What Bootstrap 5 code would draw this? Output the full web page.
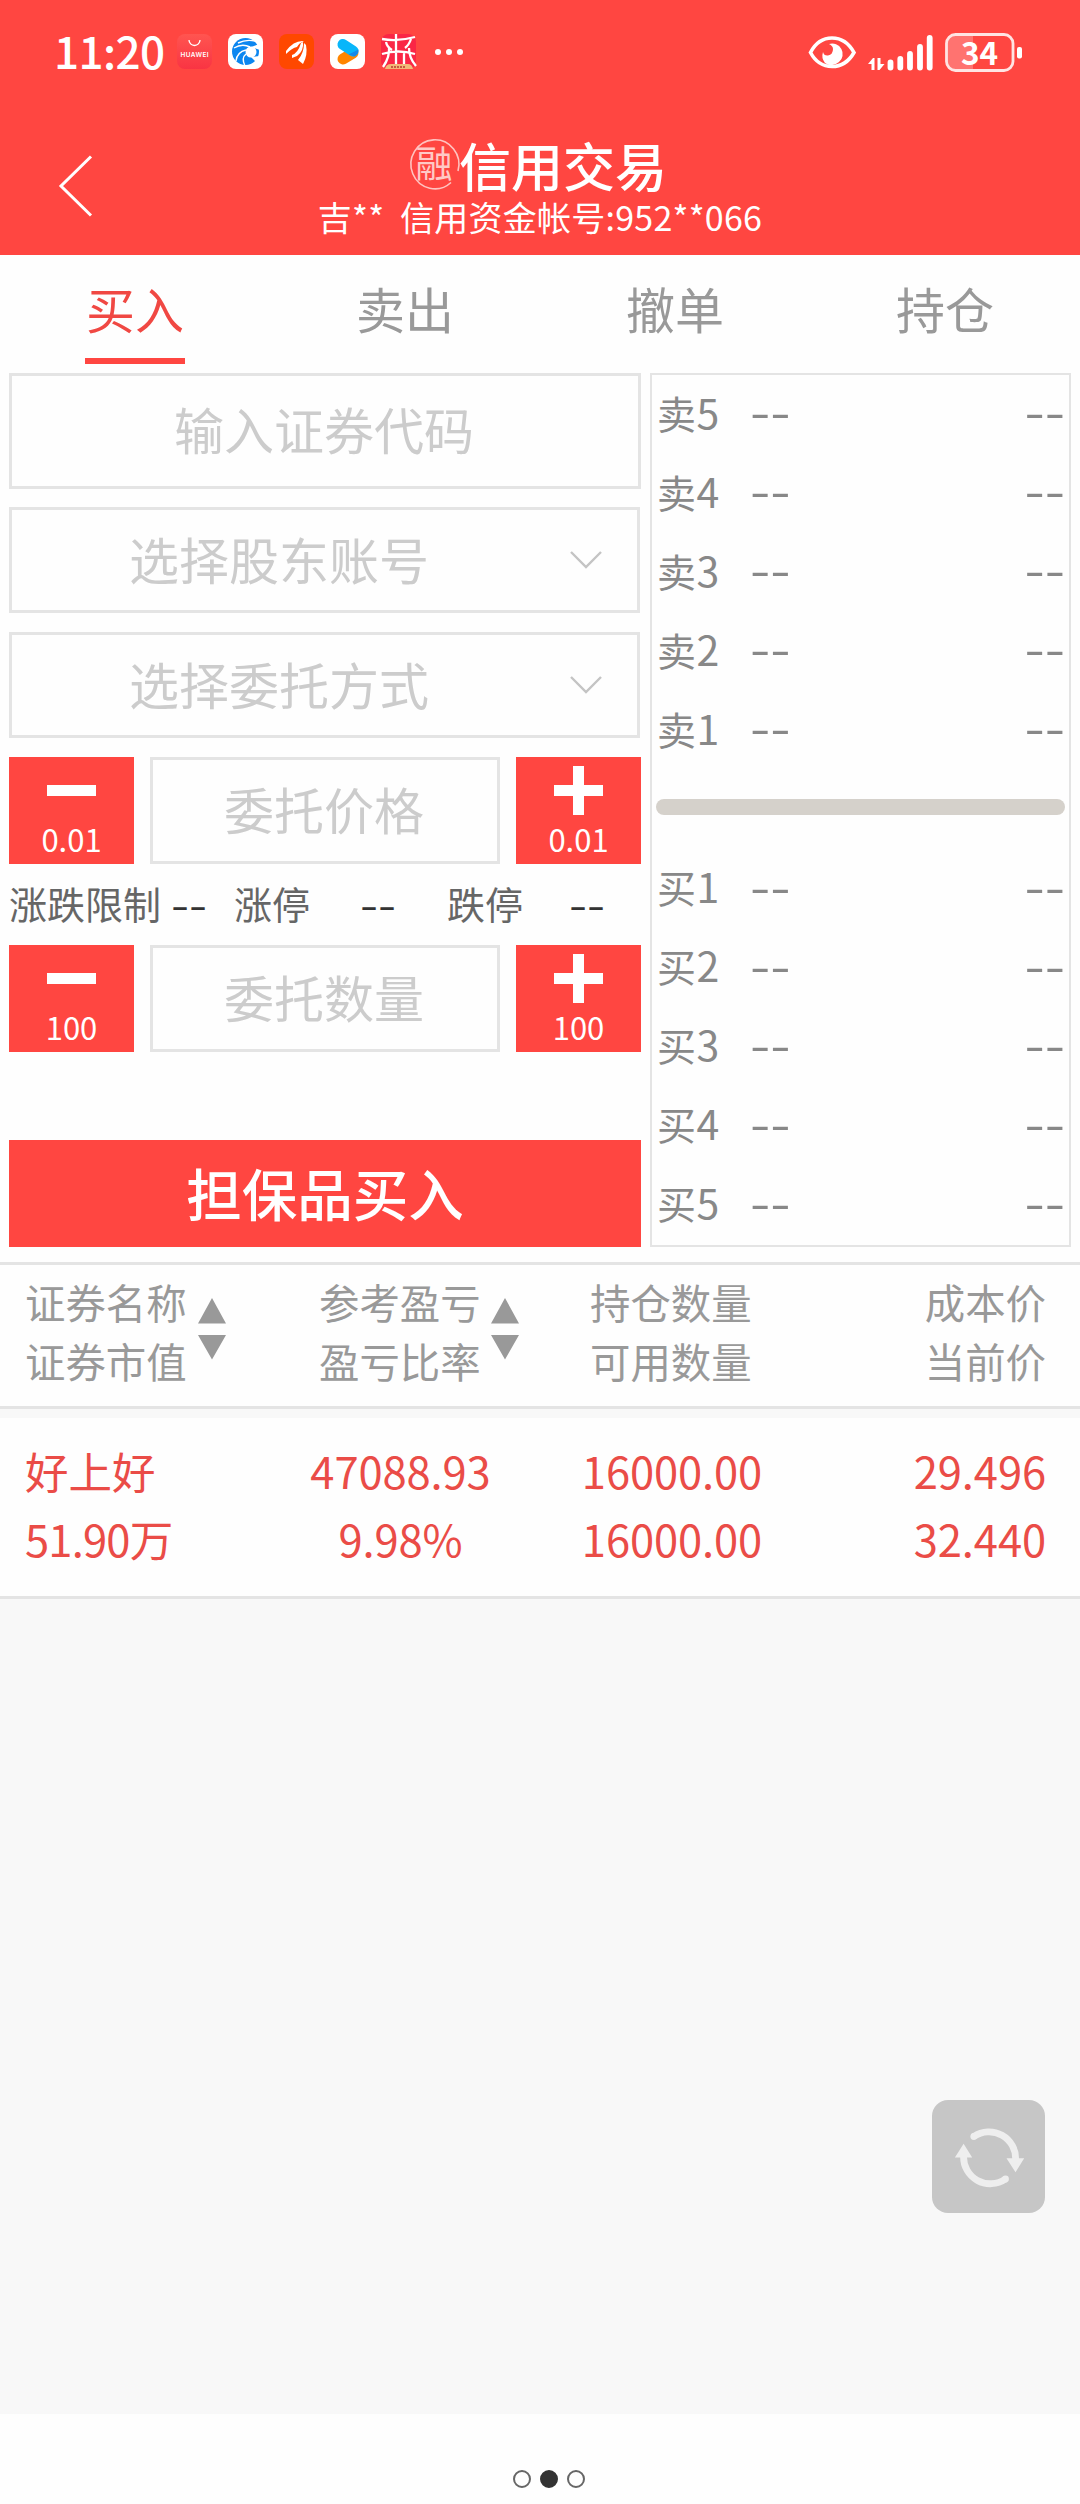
<!DOCTYPE html>
<html lang="zh-CN">
<head>
<meta charset="utf-8">
<meta name="viewport" content="width=device-width, initial-scale=1">
<title>信用交易</title>
<link rel="stylesheet" href="https://cdn.jsdelivr.net/npm/bootstrap@5.3.0/dist/css/bootstrap.min.css">
<style>
:root{--brand:#ff4641;--line:#e4e4e4;--hint:#ccc}
body{font-family:"Noto Sans CJK SC","Noto Sans",sans-serif;background:#fefefe;width:1080px;height:2504px;overflow:hidden}
svg{display:block;flex:none;overflow:visible}
.top-area{background:var(--brand);height:255px}
.status-bar{height:103px;padding:0 58px 0 54px}
.clock{font-size:44px;line-height:60px;font-weight:500;letter-spacing:-.6px;width:123px;padding-bottom:3px}
.app-icons{gap:16px}
.title-area{height:152px}
.back-btn{left:56px;top:51px}
.title-line{font-size:52px;line-height:60px;padding:32px 4px 0 0;font-weight:500}
.account-line{font-size:34px;line-height:40px;margin-top:2px;letter-spacing:.25px}
.trade-tabs{height:118px;padding-top:3px}
.trade-tabs .nav-link{padding:0;width:100px;height:106px;line-height:100px;font-size:49px;color:#999;border-bottom:6px solid transparent;border-radius:0;text-align:center;white-space:nowrap}
.trade-tabs .nav-link.active{color:#f04843;border-color:var(--brand)}
.trade-area{height:889px;padding:0 9px}
.order-form{width:632px;height:874px}
.entry{border:3px solid var(--line);border-radius:0;background:#fefefe;color:var(--hint);font-size:50px;line-height:70px;padding:0 2px 6px 0;display:flex;align-items:center;justify-content:center}
.entry-code{height:116px}
.entry-pick{height:106px;margin-right:1px;justify-content:space-between;padding:0 34px 5px 117px}
.entry-pick svg{margin-top:4px}
.entry-num{width:350px;height:107px;padding-bottom:5px}
.step-btn{width:125px;height:107px;background:var(--brand);border:0;border-radius:0;color:#fff;padding:9px 0 0;display:flex;flex-direction:column;align-items:center;font-size:31px;line-height:47px}
.step-btn:hover,.submit-btn:hover{background:var(--brand);color:#fff}
.limits{height:81px;font-size:38px;color:#666;padding-bottom:4px;line-height:50px}
.dash{display:inline-block;transform:scaleX(1.3);transform-origin:0 50%;color:#333;font-size:40px}
.submit-btn{height:107px;margin-top:88px;background:var(--brand);color:#fff;border:0;border-radius:0;font-size:55.5px;line-height:70px;font-weight:500;padding:0 0 4px}
.quotes{width:421px;height:874px;border:2px solid var(--line);padding:0 6px 0 5px;color:#888;font-size:39px;line-height:73px}
.quote-row{height:79.1px;padding-bottom:6px}
.quote-name{width:93px;letter-spacing:.5px}
.quote-name b{font-weight:400;font-size:41px}
.quote-row .dash{color:#888;font-size:46px;line-height:68px;padding-bottom:5px;transform:scaleX(1.27)}
.quote-row .dash.at-end{transform-origin:100% 50%;margin-right:-2px}
.split-bar{height:16px;border-radius:8px;background:#d5d1cb;margin:0 -2px 0 -1px}
.hold-head{height:147px;border-top:3px solid var(--line);border-bottom:3px solid var(--line);color:#999;font-size:40.4px;line-height:59px;padding:7px 34px 0 25px}
.hold-head .name-col{width:294px}
.hold-head .gain-col{width:271px}
.hold-head .qty-col{width:200px}
.sorter{margin:26px 0 0 11px}
.gain-col .sorter{margin-left:10px}
.list-area{background:#f8f8f8;height:1005px;padding-top:9px}
.hold-row{height:181px;background:#fefefe;border-bottom:3px solid var(--line);color:#ea4c47;font-size:43.5px;line-height:68px;padding:19px 34px 0 25px}
.hold-row .num{letter-spacing:-.1px}
.hold-row .num-wan{letter-spacing:-.8px}
.hold-row .name-col{width:255px}
.hold-row .gain-col{width:241px}
.hold-row .qty-col{width:302px}
.reload-btn{right:35px;top:2100px;width:113px;height:113px;border-radius:16px;background:#c6c6c6;border:0}
.pager{height:90px;gap:9px;padding:56px 0 0 18px}
.pager i{width:18px;height:18px;border-radius:50%;border:2px solid #666}
.pager .on{background:#333;border-color:#333}
</style>
<script src="https://cdn.jsdelivr.net/npm/bootstrap@5.3.0/dist/js/bootstrap.bundle.min.js"></script>
</head>
<body>
<header class="top-area text-white">
  <div class="status-bar d-flex align-items-center justify-content-between">
    <div class="d-flex align-items-center">
      <div class="clock">11:20</div>
      <div class="app-icons d-flex align-items-center">
        <svg width="35" height="35" viewBox="0 0 35 35"><defs><linearGradient id="hw" x2="0" y2="1"><stop stop-color="#ff5550"/><stop offset="1" stop-color="#f93443"/></linearGradient></defs><rect width="35" height="35" rx="8" fill="url(#hw)"/><path d="M12 6a5.500 5.500 0 0 0 11 0" fill="none" stroke="#fff" stroke-width="1.300"/><text x="17.500" y="23" font-family="Inter,sans-serif" font-weight="600" font-size="6.400" fill="#fff" text-anchor="middle" textLength="28">HUAWEI</text></svg>
        <svg width="35" height="35" viewBox="0 0 35 35"><rect width="35" height="35" rx="8" fill="#fff"/><circle cx="17.500" cy="17.500" r="13.500" fill="#0b86f0"/><circle cx="23" cy="18" r="5.500" fill="#fff"/><path d="M32 16L23 13l8-3zM23 23l8-1-3 6z" fill="#fff"/><path d="M22 13Q14 9 6 14M18 16Q9 18 8 27M18 20q-5 4-1 12M10 9q8-4 17-2" fill="none" stroke="#fff" stroke-width="1.400"/></svg>
        <svg width="35" height="35" viewBox="0 0 35 35"><rect width="35" height="35" rx="8" fill="#ff4800"/><path d="M7 17Q15 6 25 7q-5 2-7 6-5 1-11 7zM13 21q6-2 9-12l2-1q1 9-6 14l-5 2zM19 26q6-7 6-17l2 2q2 10-3 19z" fill="#fff"/></svg>
        <svg width="35" height="35" viewBox="0 0 35 35"><rect width="35" height="35" rx="8" fill="#fff"/><path d="M13 25L23 19" stroke="#ff8500" stroke-width="11" stroke-linecap="round"/><path d="M13 10.500L23 17" stroke="#08b6fa" stroke-width="11" stroke-linecap="round"/><path d="M18.500 20.500l10-5q0 5-4 7z" fill="#1689e8"/></svg>
        <svg width="35" height="35" viewBox="0 0 35 35"><rect width="35" height="35" rx="8" fill="#fa2645"/><path d="M1 5q15 3 33-2M1 20q16-5 33 0M15 0v33M8 13q1 10-6 20M23 18v13M28 14q0 10 7 18M5 8q1 5 6 8M30 5q-2 6-6 9" fill="none" stroke="#fff" stroke-width="2.300"/><path d="M4 35q1-5 6-5h17q4 0 5 5z" fill="#f2b878"/><path d="M10 33h14" stroke="#b83b31" stroke-width="1.500" stroke-dasharray="2 1"/></svg>
        <svg width="32" height="8" viewBox="0 0 32 8"><g fill="#fff"><circle cx="6" cy="4" r="3"/><circle cx="17" cy="4" r="3"/><circle cx="28" cy="4" r="3"/></g></svg>
      </div>
    </div>
    <svg width="214" height="42" viewBox="808 30 214 42">
      <path d="M810.500 51.500Q818 37 832 37t22 14.500Q846 65.500 832 65.500T810.500 51.500Z" fill="none" stroke="#fff" stroke-width="3.600"/>
      <path d="M829 43a10.500 10.500 0 0 1 10 18Q832 67 825 62q-4-5-2-11 1 4 5 3.500 5-1 5-6.500 0-3-4-5z" fill="#fff"/>
      <path d="M868 63l5-6h1.500v12h-3v-6zM877.500 57h3v6h4l-5 6h-2z" fill="#fff"/>
      <path d="M890.500 61.500v5M900.300 58v8.500M910 53v13.500M920 46v20.500M929.700 37v29.500" stroke="#fff" stroke-width="5.800" stroke-linecap="round"/>
      <path d="M956 34h17v35h-17q-9-1-9-9V43q0-8 9-9z" fill="#ff7370"/>
      <rect x="946.500" y="33.500" width="66.500" height="36" rx="9" fill="none" stroke="#ffe4e3" stroke-width="2.800"/>
      <rect x="1017" y="46" width="5" height="11.500" rx="2" fill="#fff"/>
      <text x="979.500" y="63.500" text-anchor="middle" font-family="Noto Sans CJK SC,sans-serif" font-size="31.500" font-weight="700" fill="#fff">34</text>
    </svg>
  </div>
  <div class="title-area position-relative text-center">
    <a class="back-btn position-absolute" href="#" aria-label="返回"><svg width="38" height="64" viewBox="0 0 38 64"><path d="M35 2.500L5 32l30 29.500" fill="none" stroke="#fff" stroke-width="3"/></svg></a>
    <div class="title-line d-flex justify-content-center align-items-center">
      <svg width="50" height="52" viewBox="0 0 50 52"><path d="M49 32A24 24.500 0 1 0 42 43.500" fill="none" stroke="#ffc3c0" stroke-width="1.600"/><text x="25" y="39" text-anchor="middle" font-family="Noto Sans CJK SC,sans-serif" font-size="37" font-weight="400" fill="#ffc9c6">融</text></svg>
      <span>信用交易</span>
    </div>
    <div class="account-line">吉**&nbsp; 信用资金帐号:952**066</div>
  </div>
</header>

<nav class="trade-tabs nav row g-0">
  <div class="col-3 d-flex justify-content-center"><a class="nav-link active" href="#">买入</a></div>
  <div class="col-3 d-flex justify-content-center"><a class="nav-link" href="#">卖出</a></div>
  <div class="col-3 d-flex justify-content-center"><a class="nav-link" href="#">撤单</a></div>
  <div class="col-3 d-flex justify-content-center"><a class="nav-link" href="#">持仓</a></div>
</nav>

<main>
  <section class="trade-area d-flex justify-content-between">
    <div class="order-form d-flex flex-column">
      <div class="entry entry-code">输入证券代码</div>
      <div class="entry entry-pick" style="margin-top:18px"><span>选择股东账号</span><svg width="34" height="20" viewBox="0 0 34 20"><path d="M2 2l15 15L32 2" fill="none" stroke="#c4c4c4" stroke-width="2.400"/></svg></div>
      <div class="entry entry-pick" style="margin-top:19px"><span>选择委托方式</span><svg width="34" height="20" viewBox="0 0 34 20"><path d="M2 2l15 15L32 2" fill="none" stroke="#c4c4c4" stroke-width="2.400"/></svg></div>
      <div class="d-flex justify-content-between" style="margin-top:19px">
        <button class="step-btn btn"><svg width="49" height="49" viewBox="0 0 49 49"><path d="M0 24.500h49" stroke="#fff" stroke-width="11"/></svg>0.01</button>
        <div class="entry entry-num">委托价格</div>
        <button class="step-btn btn"><svg width="49" height="49" viewBox="0 0 49 49"><path d="M0 24.500h49M24.500 0v49" stroke="#fff" stroke-width="11"/></svg>0.01</button>
      </div>
      <div class="limits d-flex align-items-center">
        <span style="width:162px">涨跌限制</span><span class="dash" style="width:63px">--</span>
        <span style="width:126px">涨停</span><span class="dash" style="width:87px">--</span>
        <span style="width:122px">跌停</span><span class="dash">--</span>
      </div>
      <div class="d-flex justify-content-between">
        <button class="step-btn btn"><svg width="49" height="49" viewBox="0 0 49 49"><path d="M0 24.500h49" stroke="#fff" stroke-width="11"/></svg>100</button>
        <div class="entry entry-num">委托数量</div>
        <button class="step-btn btn"><svg width="49" height="49" viewBox="0 0 49 49"><path d="M0 24.500h49M24.500 0v49" stroke="#fff" stroke-width="11"/></svg>100</button>
      </div>
      <button class="submit-btn btn w-100">担保品买入</button>
    </div>
    <div class="quotes">
      <div class="quote-row d-flex align-items-center"><span class="quote-name">卖<b>5</b></span><span class="dash">--</span><span class="dash at-end ms-auto">--</span></div>
      <div class="quote-row d-flex align-items-center"><span class="quote-name">卖<b>4</b></span><span class="dash">--</span><span class="dash at-end ms-auto">--</span></div>
      <div class="quote-row d-flex align-items-center"><span class="quote-name">卖<b>3</b></span><span class="dash">--</span><span class="dash at-end ms-auto">--</span></div>
      <div class="quote-row d-flex align-items-center"><span class="quote-name">卖<b>2</b></span><span class="dash">--</span><span class="dash at-end ms-auto">--</span></div>
      <div class="quote-row d-flex align-items-center"><span class="quote-name">卖<b>1</b></span><span class="dash">--</span><span class="dash at-end ms-auto">--</span></div>
      <div class="quote-row d-flex flex-column justify-content-center"><div class="split-bar"></div></div>
      <div class="quote-row d-flex align-items-center"><span class="quote-name">买<b>1</b></span><span class="dash">--</span><span class="dash at-end ms-auto">--</span></div>
      <div class="quote-row d-flex align-items-center"><span class="quote-name">买<b>2</b></span><span class="dash">--</span><span class="dash at-end ms-auto">--</span></div>
      <div class="quote-row d-flex align-items-center"><span class="quote-name">买<b>3</b></span><span class="dash">--</span><span class="dash at-end ms-auto">--</span></div>
      <div class="quote-row d-flex align-items-center"><span class="quote-name">买<b>4</b></span><span class="dash">--</span><span class="dash at-end ms-auto">--</span></div>
      <div class="quote-row d-flex align-items-center"><span class="quote-name">买<b>5</b></span><span class="dash">--</span><span class="dash at-end ms-auto">--</span></div>
    </div>
  </section>

  <section class="hold-head d-flex">
    <div class="name-col d-flex"><div>证券名称<br>证券市值</div><svg class="sorter" width="28" height="62" viewBox="0 0 28 62"><path d="M14 0l14 25.500H0zM14 61.500L0 37h28z" fill="#999"/></svg></div>
    <div class="gain-col d-flex"><div>参考盈亏<br>盈亏比率</div><svg class="sorter" width="28" height="62" viewBox="0 0 28 62"><path d="M14 0l14 25.500H0zM14 61.500L0 37h28z" fill="#999"/></svg></div>
    <div class="qty-col">持仓数量<br>可用数量</div>
    <div class="ms-auto text-end">成本价<br>当前价</div>
  </section>

  <section class="list-area">
    <div class="hold-row d-flex">
      <div class="name-col">好上好<br><span class="num-wan">51.90万</span></div>
      <div class="gain-col num text-center">47088.93<br>9.98%</div>
      <div class="qty-col num text-center">16000.00<br>16000.00</div>
      <div class="ms-auto num text-end">29.496<br>32.440</div>
    </div>
  </section>
  <button class="reload-btn btn position-absolute p-0 d-flex align-items-center justify-content-center" aria-label="刷新"><svg width="72" height="64" viewBox="0 0 72 64"><g fill="none" stroke="#eee" stroke-width="6.800"><path d="M20.800 11.500A26.700 26.700 0 0 1 62.600 35M52.500 54A26.700 26.700 0 0 1 10.600 31"/></g><g fill="#eee"><circle cx="20.800" cy="11.500" r="3.400"/><circle cx="52.500" cy="54" r="3.400"/><path d="M53.500 33.200h17.700L62.500 47.200zM1.900 32.500h17.300L10.600 18.800z"/></g></svg></button>
</main>

<footer class="pager d-flex justify-content-center align-items-start"><i></i><i class="on"></i><i></i></footer>
</body>
</html>
